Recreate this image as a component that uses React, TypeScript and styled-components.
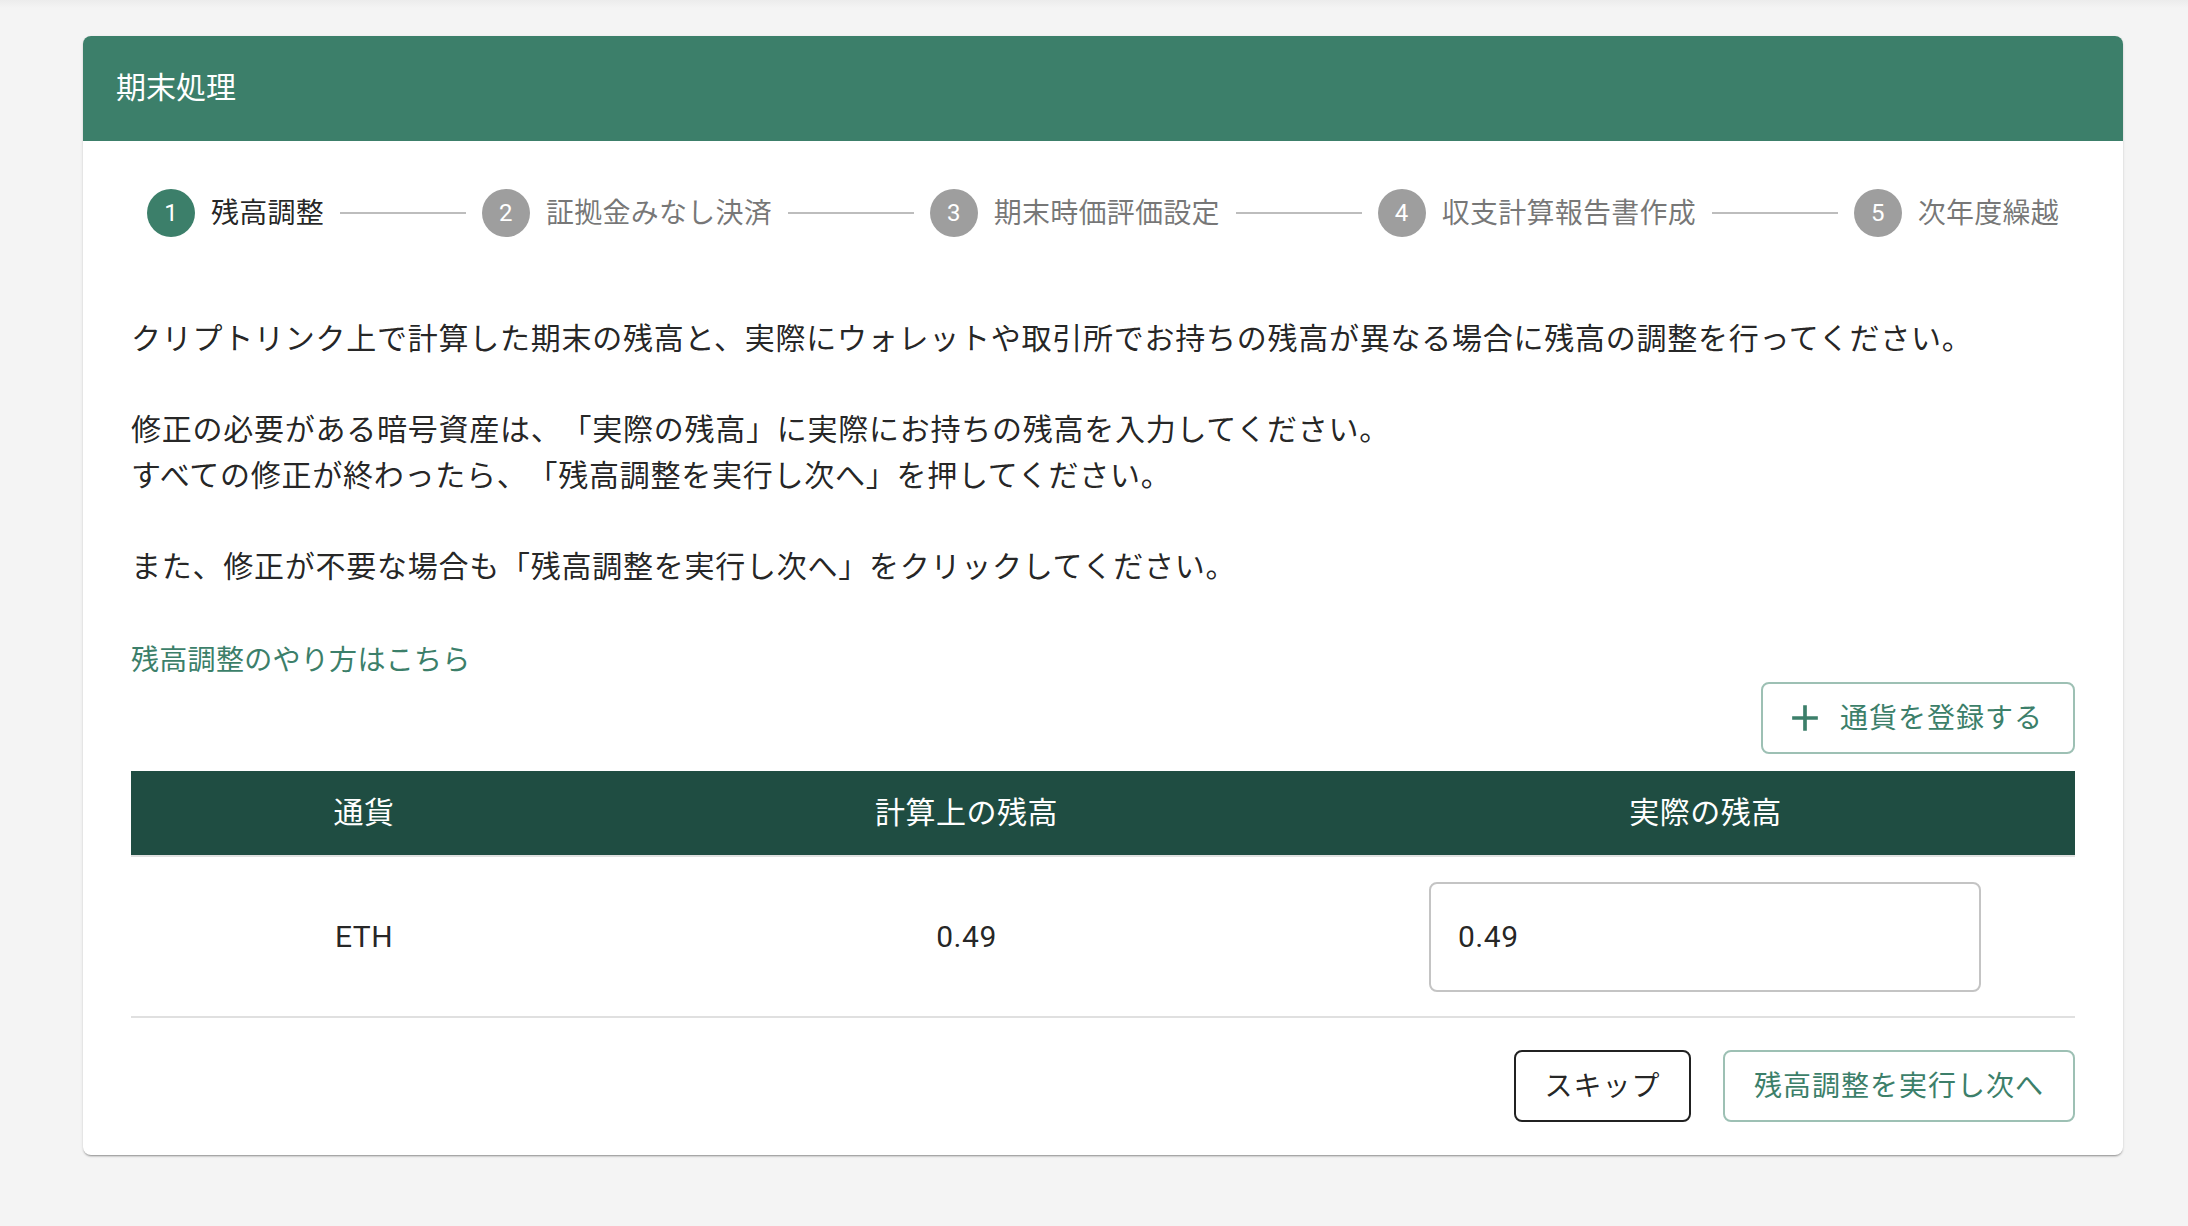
import React from "react";
import styled, { createGlobalStyle } from "styled-components";

const Global = createGlobalStyle`
  html, body { margin: 0; padding: 0; background: #f4f4f4; }
  body {
    font-family: Roboto, "Noto Sans CJK JP", sans-serif;
    color: rgba(0, 0, 0, 0.87);
    text-spacing-trim: space-all;
  }
  * { box-sizing: border-box; }
`;

const Page = styled.main`
  min-height: 1226px;
  padding: 36px 65px 71px 83px;
  background: linear-gradient(#ececec 0, #f4f4f4 8px);
`;

const Card = styled.section`
  height: 1119px;
  background: #fff;
  border-radius: 8px;
  box-shadow: 0 2px 2px -1px rgba(0, 0, 0, 0.35), 0 1px 3px 0 rgba(0, 0, 0, 0.12);
  overflow: hidden;
`;

const CardHeader = styled.header`
  height: 105px;
  padding: 0 33px 8px;
  display: flex;
  align-items: center;
  background: #3c7f6a;
  color: #fff;
  font-size: 30px;
`;

const Stepper = styled.ol`
  list-style: none;
  margin: 0;
  padding: 48px 64px 0;
  display: flex;
  align-items: center;
`;

const Step = styled.li<{ $active?: boolean }>`
  display: flex;
  align-items: center;
  gap: 16px;
  font-size: 28px;
  letter-spacing: 0.25px;
  color: ${(p) => (p.$active ? "rgba(0,0,0,0.87)" : "rgba(0,0,0,0.54)")};
`;

const StepLabel = styled.span`
  padding-bottom: 5px;
`;

const StepDot = styled.span<{ $active?: boolean }>`
  width: 48px;
  height: 48px;
  border-radius: 50%;
  display: flex;
  align-items: center;
  justify-content: center;
  background: ${(p) => (p.$active ? "#3c7f6a" : "#9e9e9e")};
  color: #fff;
  font-size: 24px;
`;

const Connector = styled.span`
  flex: 1;
  height: 2px;
  margin: 0 16px;
  background: #bdbdbd;
`;

const Body = styled.div`
  padding: 79px 48px 0 48px;
`;

const Paragraph = styled.p`
  margin: 0 0 45.5px;
  font-size: 30px;
  line-height: 45.5px;
  letter-spacing: 0.75px;
  white-space: pre-line;
`;

const HelpLink = styled.a`
  display: block;
  padding-top: 3px;
  font-size: 28px;
  line-height: 45.5px;
  letter-spacing: 0.3px;
  color: #3c7f6a;
  text-decoration: none;
`;

const Toolbar = styled.div`
  margin-top: -1px;
  display: flex;
  justify-content: flex-end;
`;

const Button = styled.button<{ $dark?: boolean; $width: number }>`
  height: 72px;
  width: ${(p) => p.$width}px;
  padding: 0 0 4px;
  display: inline-flex;
  align-items: center;
  justify-content: center;
  white-space: nowrap;
  background: #fff;
  border: 2px solid ${(p) => (p.$dark ? "#212121" : "#9dc0b4")};
  border-radius: 8px;
  font-family: inherit;
  font-size: 28px;
  letter-spacing: 1px;
  color: ${(p) => (p.$dark ? "rgba(0,0,0,0.87)" : "#3c7f6a")};
`;

const PlusIcon = styled.svg`
  width: 44px;
  height: 44px;
  margin: 4px 13px 0 -10px;
  fill: #3c7f6a;
`;

const TableHead = styled.div`
  margin-top: 17px;
  height: 86px;
  padding-bottom: 6px;
  display: grid;
  grid-template-columns: 466px 739px 739px;
  align-items: center;
  text-align: center;
  background: #1f4d42;
  border-bottom: 2px solid #e0e0e0;
  color: #fff;
  font-size: 30px;
  letter-spacing: 0.5px;
`;

const TableRow = styled.div`
  height: 161px;
  display: grid;
  grid-template-columns: 466px 739px 739px;
  align-items: center;
  text-align: center;
  border-bottom: 2px solid #e0e0e0;
  font-size: 30px;
  letter-spacing: 0.5px;
`;

const InputCell = styled.div`
  display: flex;
  justify-content: center;
  padding-right: 1px;
`;

const Input = styled.input`
  display: block;
  width: 552px;
  height: 110px;
  padding: 0 27px;
  border: 2px solid #c4c4c4;
  border-radius: 8px;
  font-family: inherit;
  font-size: 30px;
  letter-spacing: 0.5px;
  color: rgba(0, 0, 0, 0.87);
  outline: none;
`;

const Actions = styled.div`
  margin-top: 32px;
  display: flex;
  justify-content: flex-end;
  gap: 32px;
`;

const steps = ["残高調整", "証拠金みなし決済", "期末時価評価設定", "収支計算報告書作成", "次年度繰越"];

export default function App() {
  return (
    <>
      <Global />
      <Page>
        <Card>
          <CardHeader>期末処理</CardHeader>
          <Stepper>
            {steps.map((s, i) => (
              <React.Fragment key={s}>
                {i > 0 && <Connector />}
                <Step $active={i === 0}>
                  <StepDot $active={i === 0}>{i + 1}</StepDot>
                  <StepLabel>{s}</StepLabel>
                </Step>
              </React.Fragment>
            ))}
          </Stepper>
          <Body>
            <Paragraph>クリプトリンク上で計算した期末の残高と、実際にウォレットや取引所でお持ちの残高が異なる場合に残高の調整を行ってください。</Paragraph>
            <Paragraph>{"修正の必要がある暗号資産は、「実際の残高」に実際にお持ちの残高を入力してください。\nすべての修正が終わったら、「残高調整を実行し次へ」を押してください。"}</Paragraph>
            <Paragraph>また、修正が不要な場合も「残高調整を実行し次へ」をクリックしてください。</Paragraph>
            <HelpLink href="#">残高調整のやり方はこちら</HelpLink>
            <Toolbar>
              <Button $width={314}>
                <PlusIcon viewBox="0 0 24 24"><path d="M19 13h-6v6h-2v-6H5v-2h6V5h2v6h6v2z" /></PlusIcon>
                通貨を登録する
              </Button>
            </Toolbar>
            <TableHead>
              <span>通貨</span>
              <span>計算上の残高</span>
              <span>実際の残高</span>
            </TableHead>
            <TableRow>
              <span>ETH</span>
              <span>0.49</span>
              <InputCell><Input defaultValue="0.49" /></InputCell>
            </TableRow>
            <Actions>
              <Button $dark $width={177}>スキップ</Button>
              <Button $width={352}>残高調整を実行し次へ</Button>
            </Actions>
          </Body>
        </Card>
      </Page>
    </>
  );
}
